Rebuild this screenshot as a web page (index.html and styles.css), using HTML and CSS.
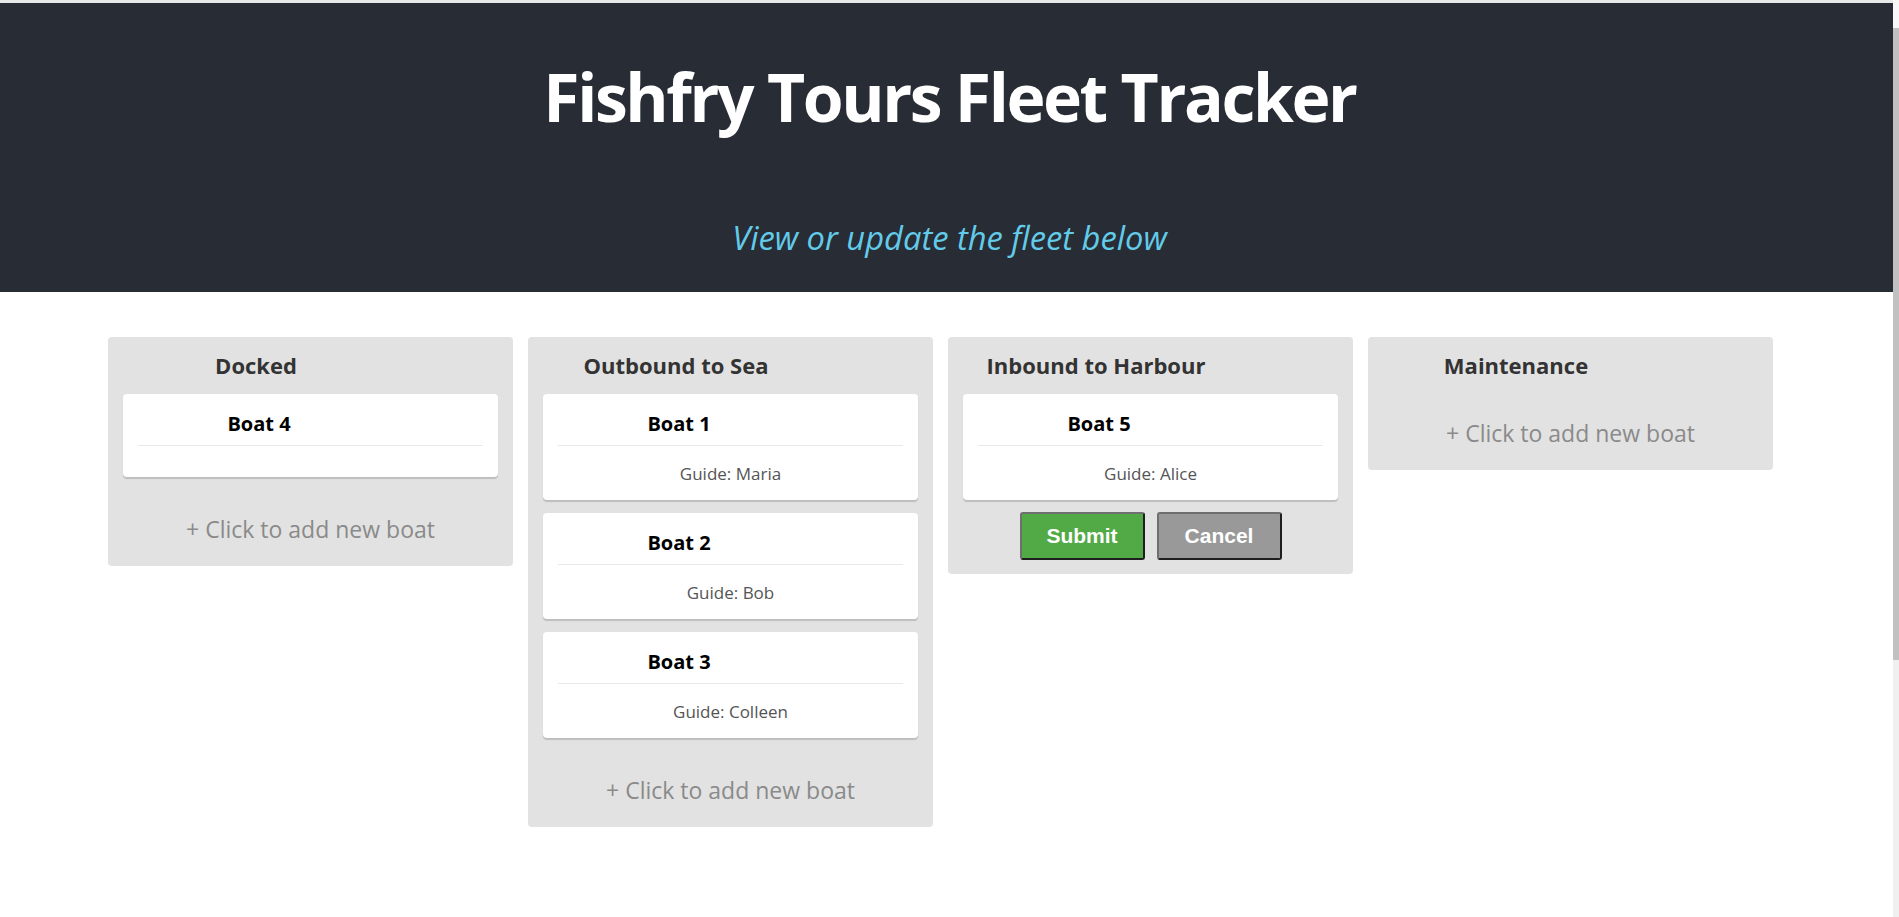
FILE: index.html
```html
<!DOCTYPE html>
<html lang="en">
<head>
<meta charset="utf-8">
<title>Fishfry Tours Fleet Tracker</title>
<link rel="stylesheet" href="styles.css">
</head>
<body>
<div class="page">
  <header class="app-header">
    <h1 class="app-title">Fishfry Tours Fleet Tracker</h1>
    <p class="app-subtitle">View or update the fleet below</p>
  </header>
  <main class="board">
    <section class="lane">
      <div class="lane-head"><h2 class="lane-title">Docked</h2></div>
      <div class="lane-cards">
        <article class="boat">
          <div class="boat-head"><h3 class="boat-title">Boat 4</h3></div>
          <div class="boat-guide"></div>
        </article>
      </div>
      <div class="lane-add">+ Click to add new boat</div>
    </section>
    <section class="lane">
      <div class="lane-head"><h2 class="lane-title">Outbound to Sea</h2></div>
      <div class="lane-cards">
        <article class="boat">
          <div class="boat-head"><h3 class="boat-title">Boat 1</h3></div>
          <div class="boat-guide">Guide: Maria</div>
        </article>
        <article class="boat">
          <div class="boat-head"><h3 class="boat-title">Boat 2</h3></div>
          <div class="boat-guide">Guide: Bob</div>
        </article>
        <article class="boat">
          <div class="boat-head"><h3 class="boat-title">Boat 3</h3></div>
          <div class="boat-guide">Guide: Colleen</div>
        </article>
      </div>
      <div class="lane-add">+ Click to add new boat</div>
    </section>
    <section class="lane">
      <div class="lane-head"><h2 class="lane-title">Inbound to Harbour</h2></div>
      <div class="lane-cards lane-cards-editing">
        <article class="boat">
          <div class="boat-head"><h3 class="boat-title">Boat 5</h3></div>
          <div class="boat-guide">Guide: Alice</div>
        </article>
      </div>
      <div class="lane-actions">
        <button class="btn btn-submit" type="button">Submit</button>
        <button class="btn btn-cancel" type="button">Cancel</button>
      </div>
    </section>
    <section class="lane">
      <div class="lane-head"><h2 class="lane-title">Maintenance</h2></div>
      <div class="lane-cards"></div>
      <div class="lane-add">+ Click to add new boat</div>
    </section>
  </main>
</div>
<div class="fake-scrollbar" aria-hidden="true"><div class="fake-scrollbar-thumb"></div></div>
</body>
</html>
```

FILE: styles.css
```css
html {
  background: #ffffff;
}

body {
  margin: 0;
  font-family: "Open Sans", "Noto Sans", sans-serif;
  color: #333;
}

.page {
  border-top: 3px solid #e8e8e8;
}

.app-header {
  background: #282c34;
  text-align: center;
  padding: 53px 0 34px;
}

.app-title {
  margin: 0;
  font-size: 66px;
  line-height: 80px;
  font-weight: 700;
  letter-spacing: -2.4px;
  color: #ffffff;
}

.app-subtitle {
  margin: 82px 0 0;
  font-size: 32.7px;
  line-height: 40px;
  font-style: italic;
  font-weight: 400;
  color: #63cbea;
}

.board {
  display: flex;
  align-items: flex-start;
  gap: 15px;
  padding: 45px 0 0 108px;
}

.lane {
  width: 405px;
  box-sizing: border-box;
  background: #e2e2e2;
  border-radius: 4px;
  padding: 14px 15px 0;
}

.lane-head {
  display: flex;
}

.lane-title {
  width: 266px;
  margin: 0;
  text-align: center;
  font-size: 22px;
  line-height: 28px;
  font-weight: 700;
  color: #333;
}

.lane-cards {
  margin-top: 15px;
}

.lane-cards-editing .boat:last-child {
  margin-bottom: 12px;
}

.boat {
  background: #ffffff;
  border-radius: 4px;
  box-shadow: 0 2px 1px rgba(0, 0, 0, 0.16);
  padding: 0 15px;
  margin-bottom: 13px;
}

.boat-head {
  display: flex;
  padding: 18px 0 9px;
  border-bottom: 1px solid #e9e9e9;
}

.boat-title {
  width: 242px;
  margin: 0;
  text-align: center;
  font-size: 20px;
  line-height: 24px;
  font-weight: 700;
  color: #000;
}

.boat-guide {
  padding: 15px 0 14px;
  text-align: center;
  font-size: 17px;
  line-height: 25px;
  color: #555;
}

.boat-guide:empty {
  padding: 31px 0 0;
}

.lane-add {
  padding: 24px 0 22px;
  text-align: center;
  font-size: 23px;
  line-height: 30px;
  color: #8a8a8a;
}

.lane-actions {
  display: flex;
  justify-content: center;
  gap: 12px;
  padding-bottom: 14px;
}

.btn {
  width: 125px;
  height: 48px;
  box-sizing: border-box;
  border: 2px solid;
  border-color: #6f6f6f #1e1e1e #1e1e1e #6f6f6f;
  border-radius: 3px;
  font-family: "Liberation Sans", Arial, sans-serif;
  font-size: 21px;
  font-weight: 700;
  color: #ffffff;
  padding: 0;
}

.btn-submit {
  background: #52aa46;
}

.btn-cancel {
  background: #999999;
}

.fake-scrollbar {
  position: fixed;
  top: 0;
  right: 0;
  width: 6px;
  height: 100vh;
  background: #f0f0f0;
  border-top: 28px solid #f8f8f8;
  box-sizing: border-box;
}

.fake-scrollbar-thumb {
  height: 632px;
  background: #c1c1c1;
}
```
